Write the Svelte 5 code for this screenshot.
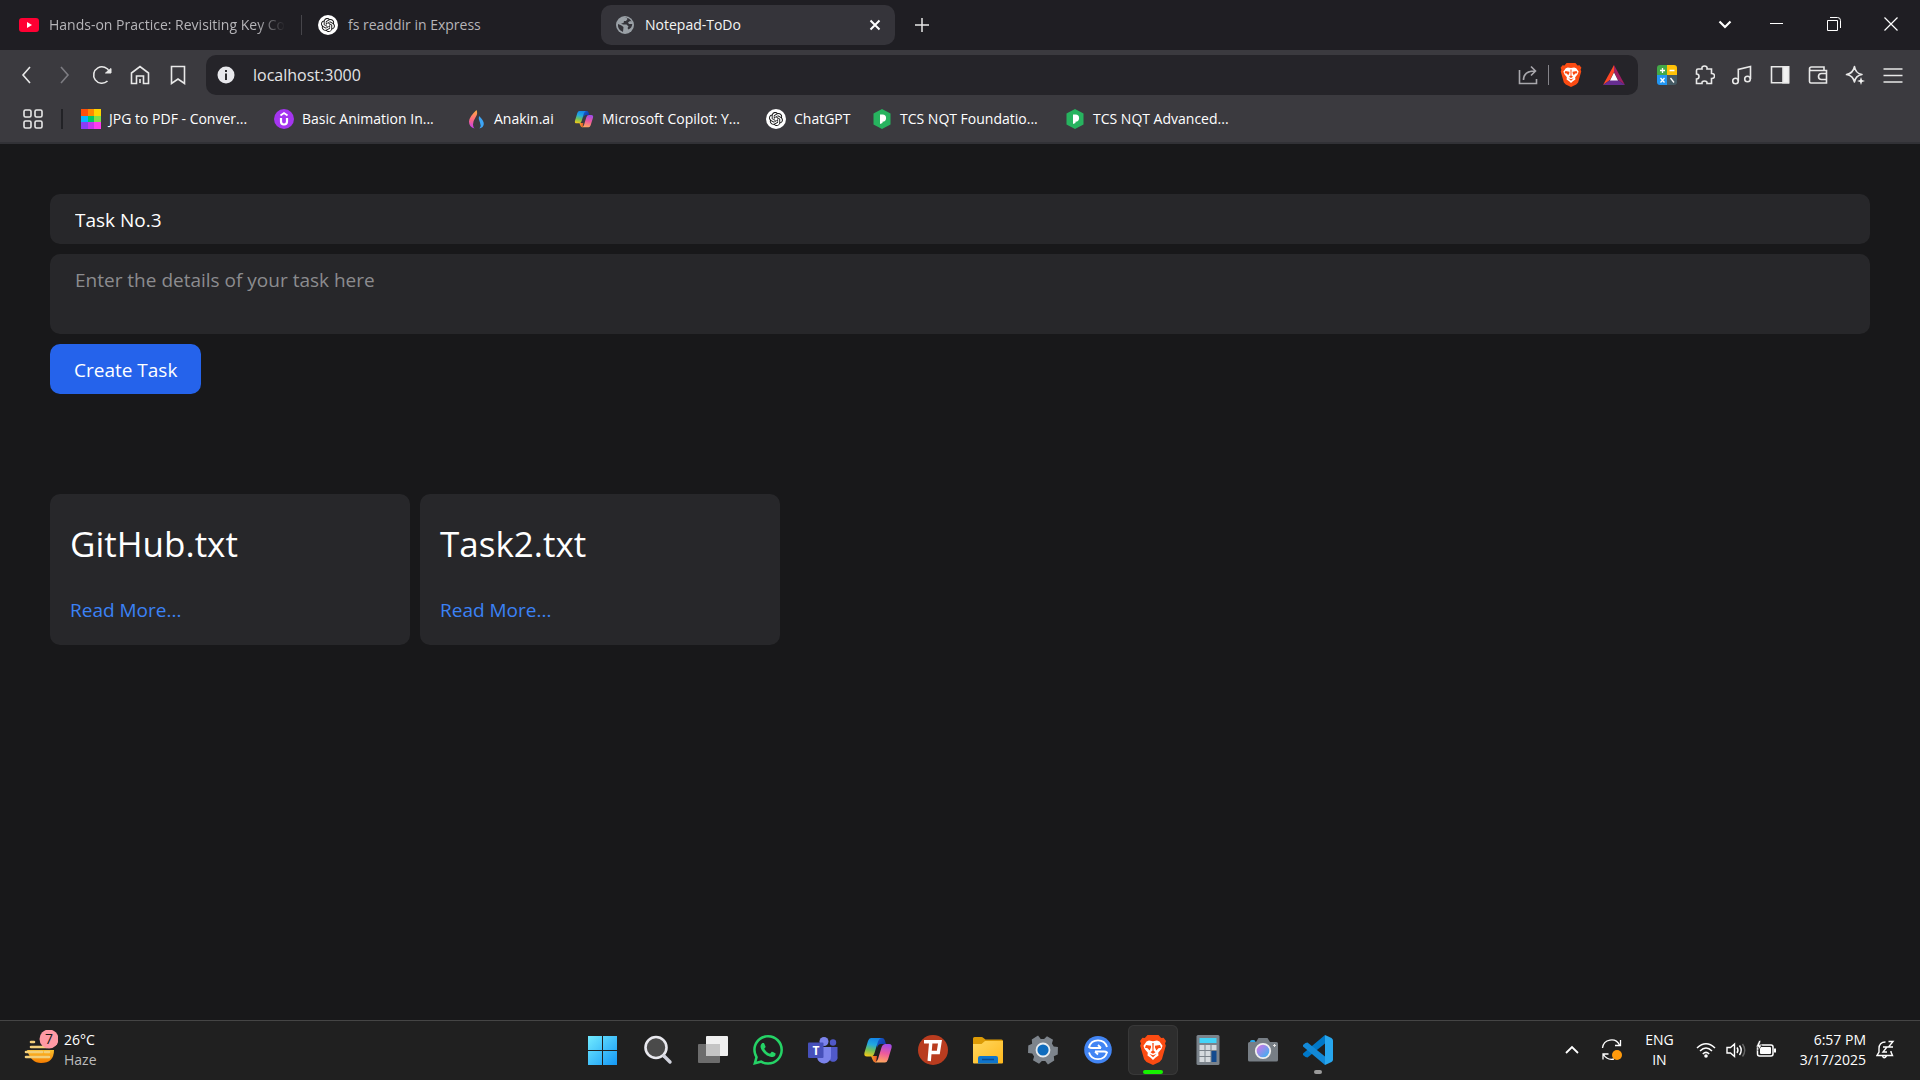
<script>
  let url = $state('localhost:3000');
  let title = $state('Task No.3');
  let details = $state('');
  const files = ['GitHub.txt', 'Task2.txt'];
  const bookmarks = [
    { icon: 'grid', label: 'JPG to PDF - Conver...' },
    { icon: 'uni', label: 'Basic Animation In...' },
    { icon: 'flame', label: 'Anakin.ai' },
    { icon: 'copilot', label: 'Microsoft Copilot: Y...' },
    { icon: 'openai', label: 'ChatGPT' },
    { icon: 'prep', label: 'TCS NQT Foundatio...' },
    { icon: 'prep', label: 'TCS NQT Advanced...' }
  ];
  const apps = [
    ['start', 'Start'],
    ['search', 'Search'],
    ['taskview', 'Task view'],
    ['whatsapp', 'WhatsApp'],
    ['teams', 'Teams'],
    ['copilot', 'Copilot'],
    ['psiphon', 'Psiphon'],
    ['folder', 'File Explorer'],
    ['gear', 'Settings'],
    ['share', 'Quick Share'],
    ['brave', 'Brave'],
    ['calc', 'Calculator'],
    ['camera', 'Camera'],
    ['vscode', 'Visual Studio Code']
  ];
</script>

{#snippet brave(size)}
  <svg width={size} height={size} viewBox="0 0 30 30">
    <path fill="#fb4b12" d="M9.5 0h11l2.7 3 2.4-.3 2.4 3.2-1 2.6.8 2.2-3.9 13.6-2.4 2.6L15 30l-6.500-3.100-2.400-2.600L2.200 10.700 3 8.500 2 5.900l2.400-3.200 2.400.3z" />
    <path fill="#fff" d="M11 5.500l4 .8 4-.8 2.500 1 3 4.200-1 3-3.300 4 .3 2.800-3.200 2.300L15 25l-2.300-2.200-3.200-2.300.3-2.800-3.300-4-1-3 3-4.200z" />
    <path fill="#fb4b12" d="M8 10l5 .8v1.600l-1.400 3-2-2.200-2.700-.5zM22 10l-5 .8v1.600l1.400 3 2-2.200 2.700-.5zM14.300 8h1.400l-.2 7.500 2 1.800-2.500 1.500-2.500-1.500 2-1.800zM11.500 19l3.500 1.200 3.500-1.200-3.500 3.200z" />
  </svg>
{/snippet}

{#snippet openai(size)}
  <svg width={size} height={size} viewBox="0 0 40 40">
    <circle cx="20" cy="20" r="20" fill="#fff" />
    <path transform="translate(6 6) scale(1.160)" fill="#111" d="M22.2819 9.8211a5.9847 5.9847 0 0 0-.5157-4.9108 6.0462 6.0462 0 0 0-6.5098-2.9A6.0651 6.0651 0 0 0 4.9807 4.1818a5.9847 5.9847 0 0 0-3.9977 2.9 6.0462 6.0462 0 0 0 .7427 7.0966 5.98 5.98 0 0 0 .511 4.9107 6.051 6.051 0 0 0 6.5146 2.9001A5.9847 5.9847 0 0 0 13.2599 24a6.0557 6.0557 0 0 0 5.7718-4.2058 5.9894 5.9894 0 0 0 3.9977-2.9001 6.0557 6.0557 0 0 0-.7475-7.0729zm-9.022 12.6081a4.4755 4.4755 0 0 1-2.8764-1.0408l.1419-.0804 4.7783-2.7582a.7948.7948 0 0 0 .3927-.6813v-6.7369l2.02 1.1686a.071.071 0 0 1 .038.052v5.5826a4.504 4.504 0 0 1-4.4945 4.4944zm-9.6607-4.1254a4.4708 4.4708 0 0 1-.5346-3.0137l.142.0852 4.783 2.7582a.7712.7712 0 0 0 .7806 0l5.8428-3.3685v2.3324a.0804.0804 0 0 1-.0332.0615L9.74 19.9502a4.4992 4.4992 0 0 1-6.1408-1.6464zM2.3408 7.8956a4.485 4.485 0 0 1 2.3655-1.9728V11.6a.7664.7664 0 0 0 .3879.6765l5.8144 3.3543-2.0201 1.1685a.0757.0757 0 0 1-.071 0l-4.8303-2.7865A4.504 4.504 0 0 1 2.3408 7.872zm16.5963 3.8558L13.1038 8.364 15.1192 7.2a.0757.0757 0 0 1 .071 0l4.8303 2.7913a4.4944 4.4944 0 0 1-.6765 8.1042v-5.6772a.79.79 0 0 0-.407-.667zm2.0107-3.0231l-.142-.0852-4.7735-2.7818a.7759.7759 0 0 0-.7854 0L9.409 9.2297V6.8974a.0662.0662 0 0 1 .0284-.0615l4.8303-2.7866a4.4992 4.4992 0 0 1 6.6802 4.66zM8.3065 12.863l-2.02-1.1638a.0804.0804 0 0 1-.038-.0567V6.0742a4.4992 4.4992 0 0 1 7.3757-3.4537l-.142.0805L8.704 5.459a.7948.7948 0 0 0-.3927.6813zm1.0976-2.3654l2.602-1.4998 2.6069 1.4998v2.9994l-2.5974 1.4997-2.6067-1.4997Z" />
  </svg>
{/snippet}

{#snippet copilot(size)}
  <svg width={size} height={size} viewBox="0 0 30 30">
    <path fill="url(#cpDark)" d="M14 3h5q2 0 2.700 2l1.300 4h-5q-3 0-4 4z" />
    <path fill="url(#cpLeft)" d="M8 3h10q-2 .5-3 3.500L11.500 18q-1 3.500-4 3.500H4q-3.500 0-2.500-4L5 6q1-3 3-3z" />
    <path fill="url(#cpOrange)" d="M8 21h6l-1 6.500q-2.500 0-3.300-2.500z" />
    <path fill="url(#cpRight)" d="M22 27.500H12q2-.5 3-3.500l3.500-11.500q1-3.500 4-3.500H26q3.500 0 2.500 4L25 24.500q-1 3-3 3z" />
  </svg>
{/snippet}

{#snippet siteIcon(name)}
  {#if name === 'grid'}
    <svg width="20" height="20" viewBox="0 0 21 21" shape-rendering="crispEdges">
      <path fill="#ff4f0a" d="M0 0h7v7H0z" /><path fill="#ff8a00" d="M7 0h7v7H7z" /><path fill="#ffd400" d="M14 0h7v7h-7z" />
      <path fill="#08b5ff" d="M0 7h7v7H0z" /><path fill="#00c765" d="M7 7h7v7H7z" /><path fill="#7ee04c" d="M14 7h7v7h-7z" />
      <path fill="#8a3df5" d="M0 14h7v7H0z" /><path fill="#c637ee" d="M7 14h7v7H7z" /><path fill="#ff3df0" d="M14 14h7v7h-7z" />
    </svg>
  {:else if name === 'uni'}
    <svg width="20" height="20" viewBox="0 0 20 20">
      <circle cx="10" cy="10" r="10" fill="#a435f0" />
      <path d="M7 9v3.500a3 3 0 0 0 6 0V9" fill="none" stroke="#fff" stroke-width="2.200" />
      <path d="M6.500 6.500L10 4l3.500 2.500" fill="none" stroke="#fff" stroke-width="1.800" />
    </svg>
  {:else if name === 'flame'}
    <svg width="20" height="20" viewBox="0 0 20 20">
      <path fill="url(#flame)" d="M10.500 1q1.500 3.500-.5 6.500Q7 12 7 15.500q0 2.500 1.500 4Q3 18 3 12.500 3 8 10.500 1z" />
      <path fill="#3ca5f6" d="M13 7q5 4.500 4.800 8-.3 3.500-4.300 4.500 2-3 .5-6-2-3.500-1-6.500z" />
    </svg>
  {:else if name === 'copilot'}
    {@render copilot(20)}
  {:else if name === 'openai'}
    {@render openai(20)}
  {:else}
    <svg width="20" height="20" viewBox="0 0 20 20">
      <path fill="#27b35f" d="M10 0l8.500 4.500v11L10 20l-8.500-4.500v-11z" />
      <path fill="#fff" d="M8 5.500h2.500a3.600 3.600 0 0 1 0 7.200V14L8 15z" />
    </svg>
  {/if}
{/snippet}

{#snippet appIcon(name)}
  {#if name === 'copilot'}
    {@render copilot(30)}
  {:else if name === 'brave'}
    {@render brave(30)}
  {:else}
    <svg width="30" height="30" viewBox="0 0 30 30">
      {#if name === 'start'}
        <path fill="url(#win)" d="M0 1h14v14H0zM15 1h14v14H15zM0 16h14v14H0zM15 16h14v14H15z" />
      {:else if name === 'search'}
        <circle cx="13" cy="12.500" r="10.500" fill="#4a4a4a" stroke="#e8e8ee" stroke-width="2.600" />
        <path d="M21 21l6 6" stroke="#d0d2dc" stroke-width="3.400" stroke-linecap="round" />
      {:else if name === 'taskview'}
        <rect x="8" y="1" width="22" height="20" rx="1" fill="#f0f0f0" />
        <rect y="9" width="22" height="19" rx="1" fill="#6c6c6c" />
        <path fill="#c4c4c4" d="M8 9h14v12H8z" />
      {:else if name === 'whatsapp'}
        <path transform="scale(1.250)" fill="#25d366" d="M17.472 14.382c-.297-.149-1.758-.867-2.03-.967-.273-.099-.471-.148-.67.15-.197.297-.767.966-.94 1.164-.173.199-.347.223-.644.075-.297-.15-1.255-.463-2.39-1.475-.883-.788-1.48-1.761-1.653-2.059-.173-.297-.018-.458.13-.606.134-.133.298-.347.446-.52.149-.174.198-.298.298-.497.099-.198.05-.371-.025-.52-.075-.149-.669-1.612-.916-2.207-.242-.579-.487-.5-.669-.51-.173-.008-.371-.01-.57-.01-.198 0-.52.074-.792.372-.272.297-1.04 1.016-1.04 2.479 0 1.462 1.065 2.875 1.213 3.074.149.198 2.096 3.2 5.077 4.487.709.306 1.262.489 1.694.625.712.227 1.36.195 1.871.118.571-.085 1.758-.719 2.006-1.413.248-.694.248-1.289.173-1.413-.074-.124-.272-.198-.57-.347m-5.421 7.403h-.004a9.87 9.87 0 01-5.031-1.378l-.361-.214-3.741.982.998-3.648-.235-.374a9.86 9.86 0 01-1.51-5.26c.001-5.45 4.436-9.884 9.888-9.884 2.64 0 5.122 1.03 6.988 2.898a9.825 9.825 0 012.893 6.994c-.003 5.45-4.437 9.884-9.885 9.884m8.413-18.297A11.815 11.815 0 0012.05 0C5.495 0 .16 5.335.157 11.892c0 2.096.547 4.142 1.588 5.945L.057 24l6.305-1.654a11.882 11.882 0 005.683 1.448h.005c6.554 0 11.89-5.335 11.893-11.893a11.821 11.821 0 00-3.48-8.413z" />
      {:else if name === 'teams'}
        <circle cx="25" cy="7.500" r="3.200" fill="#5059c9" />
        <path fill="#5059c9" d="M21 12h8.500v9.500a3.500 3.500 0 0 1-8.500 2z" />
        <circle cx="16" cy="6.500" r="4.500" fill="#7b83eb" />
        <path fill="#7b83eb" d="M9 12h14v9a7 7 0 0 1-14 1z" />
        <rect y="7.500" width="15.500" height="15.500" rx="1" fill="#4650ba" />
        <text x="8" y="19.500" text-anchor="middle" font-size="12" font-weight="700" fill="#fff">T</text>
      {:else if name === 'psiphon'}
        <circle cx="15" cy="15" r="15" fill="#b93c1f" />
        <path fill="none" stroke="#fff" stroke-width="3.400" d="M6 6.700h16l-1.700 10.800H13M12.800 7l-1.600 19" />
      {:else if name === 'folder'}
        <path fill="#dd9b06" d="M0 3.500Q0 2 1.500 2h7q1 0 2 1l2 1.500h16Q30 4.500 30 6v6H0z" />
        <path fill="url(#fold)" d="M0 9h8.500l3.500-3h18v21.500q0 1-1 1H1q-1 0-1-1z" />
        <path fill="#0f75cc" d="M5 28.500V23q0-2 2-2h16q2 0 2 2v5.500z" />
        <path stroke="#0a4a90" stroke-width="1.500" d="M9 24.500h12" />
      {:else if name === 'gear'}
        <path fill="#7d848c" d="M11.500 1h7l1 4 3 1.500L26.500 5 30 11.500 27.500 15l2.500 3.500-3.500 6.500-4-1.500-3 1.500-1 4h-7l-1-4-3-1.500-4 1.500L0 18.500 2.500 15 0 11.500 3.500 5l4 1.500 3-1.500z" transform="rotate(30 15 15)" />
        <circle cx="15" cy="15" r="6.500" fill="#0f6cbd" stroke="#e9edf0" stroke-width="1.800" />
      {:else if name === 'share'}
        <circle cx="15" cy="14.800" r="13.800" fill="#4285f4" />
        <path fill="none" stroke="#fff" stroke-width="1.800" d="M24 12A9.400 9.400 0 0 0 6 12q1 1 3 1h9M6 17.500A9.400 9.400 0 0 0 24 17.500q-1-1-3-1h-9M15 10l3 3M15 19.500l-3-3" />
      {:else if name === 'calc'}
        <rect x="3.500" width="23" height="30" rx="1.500" fill="#7b838b" />
        <path fill="#43d4f7" d="M6.500 3h17v5h-17z" />
        <path fill="#d5dade" d="M6.500 10h5v5h-5zM12.500 10h5v5h-5zM18.500 10h5v5h-5zM6.500 16h5v5h-5zM12.500 16h5v5h-5zM6.500 22h5v5h-5zM12.500 22h5v5h-5z" />
        <path fill="#134a8e" d="M18.500 16h5v11h-5z" />
      {:else if name === 'camera'}
        <path fill="#29a8e8" d="M2 7q0-2 2-2h1.500q2 0 2 2z" />
        <path fill="#777e85" d="M1.500 7H8l2.500-4h9L22 7h6.500Q30 7 30 8.500V25q0 1.500-1.500 1.500h-27Q0 26.500 0 25V8.500Q0 7 1.500 7z" />
        <circle cx="15" cy="16" r="7.200" fill="url(#lens)" stroke="#eee" stroke-width="1.800" />
        <path stroke="#e4e4e4" d="M25 10.500h3M26.500 9v3" />
      {:else if name === 'vscode'}
        <path fill="#0078c8" d="M22 0v8.500L4.500 22.500 2.500 22 0 20v-1.500z" />
        <path fill="#1289d8" d="M22 30v-8.500L4.500 7.500 2.500 8 0 10v1.500z" />
        <path fill="#27a6ee" d="M22 0l6.500 3Q30 4 30 5.500v19q0 1.500-1.500 2.500L22 30z" />
      {/if}
    </svg>
  {/if}
{/snippet}

<svg class="defs" width="0" height="0" aria-hidden="true">
  <defs>
    <linearGradient id="win" gradientUnits="userSpaceOnUse" x1="1" y1="1" x2="30" y2="30"><stop offset="0" stop-color="#70eaff" /><stop offset="1" stop-color="#1296f5" /></linearGradient>
    <linearGradient id="fold" x1="0" y1="0" x2="1" y2="1"><stop offset="0" stop-color="#ffd75e" /><stop offset="1" stop-color="#ffb81c" /></linearGradient>
    <linearGradient id="lens" x1="0" y1="0" x2="1" y2="1"><stop offset=".2" stop-color="#c27be8" /><stop offset=".9" stop-color="#35b4f0" /></linearGradient>
    <linearGradient id="flame" x1="0" y1="0" x2="0" y2="1"><stop offset="0" stop-color="#ffb13b" /><stop offset=".5" stop-color="#ff6a7e" /><stop offset="1" stop-color="#c53bf0" /></linearGradient>
    <linearGradient id="cpLeft" x1=".5" y1="0" x2=".3" y2="1"><stop offset="0" stop-color="#1487e8" /><stop offset=".35" stop-color="#23a9e0" /><stop offset=".65" stop-color="#6fc05a" /><stop offset="1" stop-color="#f4c918" /></linearGradient>
    <linearGradient id="cpRight" x1=".6" y1="0" x2=".4" y2="1"><stop offset="0" stop-color="#a04be8" /><stop offset=".5" stop-color="#ee5a9c" /><stop offset="1" stop-color="#ffa85e" /></linearGradient>
    <linearGradient id="cpDark" x1="0" y1="0" x2="1" y2="1"><stop offset="0" stop-color="#1a5fd0" /><stop offset="1" stop-color="#0a2f9c" /></linearGradient>
    <linearGradient id="cpOrange" x1="0" y1="0" x2="1" y2="0"><stop offset="0" stop-color="#f5a623" /><stop offset="1" stop-color="#e8502c" /></linearGradient>
    <linearGradient id="sun" x1="0" y1="0" x2="0" y2="1"><stop offset="0" stop-color="#fbc02d" /><stop offset="1" stop-color="#f57c00" /></linearGradient>
  </defs>
</svg>

<div class="screen">
  <header>
    <div class="strip">
      <nav class="tabs" aria-label="Tabs">
        <button class="tab">
          <svg width="20" height="20" viewBox="0 0 20 20"><rect y="3" width="20" height="14" rx="3" fill="#ff0033" /><path fill="#fff" d="M8 7l5 3-5 3z" /></svg>
          <span class="label fade">Hands-on Practice: Revisiting Key Co</span>
        </button>
        <i class="divider"></i>
        <button class="tab">{@render openai(20)}<span class="label">fs readdir in Express</span></button>
        <div class="tab active">
          <svg width="20" height="20" viewBox="0 0 20 20"><circle cx="10" cy="10" r="9" fill="#9aa0a6" /><path fill="#35343a" d="M3 9l3.500 1.500 2 1.500-.5 5-2.500-1.500Q2.500 13 3 9zM9 2.800l2.500-.3 1 1.500-1.500 2H9l-.500 2-2.500.5L8 9.500h3.500l2 2-1 1.500 1 1.500q3.500-1.500 3.800-5.500L14 9l-1-1.500 2-1.500 1.500.500Q14.500 2 9 2.800z" /></svg>
          <span class="label">Notepad-ToDo</span>
          <button aria-label="Close tab"><svg width="12" height="12" viewBox="0 0 12 12"><path d="M1.500 1.500l9 9M10.500 1.500l-9 9" stroke="#fff" stroke-width="2" /></svg></button>
        </div>
        <button class="plus" aria-label="New tab"><svg width="14" height="14" viewBox="0 0 14 14"><path d="M7 0v14M0 7h14" stroke="#e8e8e8" stroke-width="1.500" /></svg></button>
      </nav>
      <div class="window">
        <button class="search-tabs" aria-label="Search tabs"><svg width="14" height="14" viewBox="0 0 14 14"><path d="M1.500 4.500L7 10l5.500-5.500" fill="none" stroke="#fff" stroke-width="2.200" /></svg></button>
        <button aria-label="Minimize"><svg width="14" height="14" viewBox="0 0 14 14"><path d="M0 6.500h13" stroke="#fff" /></svg></button>
        <button aria-label="Restore"><svg width="14" height="14" viewBox="0 0 14 14"><path d="M.5 3.500h10v10H.5zM3 .5h7.500q3 0 3 3V11" fill="none" stroke="#fff" /></svg></button>
        <button aria-label="Close"><svg width="14" height="14" viewBox="0 0 14 14"><path d="M.5.5l13 13M13.500.5l-13 13" stroke="#fff" stroke-width="1.200" /></svg></button>
      </div>
    </div>
    <div class="toolbar">
      <div class="nav">
        <button aria-label="Back"><svg viewBox="0 0 20 20"><path d="M14 2L7 10l7 8" /></svg></button>
        <button class="off" aria-label="Forward"><svg viewBox="0 0 20 20"><path d="M7 2l7 8-7 8" /></svg></button>
        <button aria-label="Reload"><svg viewBox="0 0 20 20"><path d="M15.500 16A8.200 8.200 0 1 1 17.500 7" /><path d="M13.500 8h5.500V3.500z" fill="#e8e8e8" stroke-width="1" /></svg></button>
        <button aria-label="Home"><svg viewBox="0 0 20 20"><path d="M1.500 18.500V8L10 1.500 18.500 8v10.500h-5V11h-7v7.500zM10 18v-4" /></svg></button>
        <button aria-label="Bookmark this page"><svg viewBox="0 0 20 20"><path d="M3.500 1.500h13v17L10 14l-6.500 4.500z" /></svg></button>
      </div>
      <div class="address">
        <svg width="18" height="18" viewBox="0 0 18 18"><circle cx="9" cy="9" r="8.500" fill="#e8e8ec" /><path d="M9 4v2M9 7.500V14" stroke="#2a2a2e" stroke-width="2" /></svg>
        <input aria-label="Address" bind:value={url} />
        <button aria-label="Share"><svg class="line dim" viewBox="0 0 20 20"><path d="M1.500 5v13.500h17V14M5.500 15q0-9 11.500-9M13 1.500L17.500 6 13 10.500" /></svg></button>
        <i class="divider light"></i>
        <button class="shield" aria-label="Brave Shields">{@render brave(24)}</button>
        <button aria-label="Brave Rewards"><svg width="22" height="20" viewBox="0 0 22 20"><path fill="#ff4724" d="M11 0v7l-4 8-7 5z" /><path fill="#9e1f63" d="M11 0l11 20-7-5-4-8z" /><path fill="#662d91" d="M0 20l7-5h8l7 5z" /><path fill="#fff" d="M11 7.500l4 8H7z" /></svg></button>
      </div>
      <div class="nav right">
        <button aria-label="Calculator extension"><svg width="20" height="20" viewBox="0 0 20 20"><path fill="#43a847" d="M3 0h7v10H0V3q0-3 3-3z" /><path fill="#ffc107" d="M10 0h7q3 0 3 3v7H10z" /><path fill="#2196f3" d="M0 10h10v10H3q-3 0-3-3z" /><path fill="#455a64" d="M10 10h10v7q0 3-3 3h-7z" /><path class="marks" d="M5.500 3v5M3 5.500h5M12.500 5.500h5M3.500 13l4 4.500M7.500 13l-4 4.500M13.500 13l3.500 4.500" /></svg></button>
        <button aria-label="Extensions"><svg viewBox="0 0 20 20"><path d="M3 4h4q-.5-3 2.500-3T12 4h4.500v4.500q3-.2 3 2.500t-3 2.500v5H12q.3-2.500-2.500-2.500T7 18.500H1.500V14Q4 14 4 11.500T1.500 9V5.500Q1.500 4 3 4z" /></svg></button>
        <button aria-label="Media"><svg viewBox="0 0 20 20"><circle cx="3.500" cy="16" r="2.800" /><circle cx="15.500" cy="14" r="2.800" /><path d="M6.300 16V4.500L18.500 1.500V14" /></svg></button>
        <button aria-label="Sidebar"><svg viewBox="0 0 20 20"><path d="M1.500 1.800h17v16h-17z" /><path d="M13 1.800h5.500v16H13z" fill="#f2f2f2" /></svg></button>
        <button aria-label="Wallet"><svg viewBox="0 0 20 20"><path d="M1.500 4.500v12q0 1.500 1.500 1.500h15.500V5.500H3Q1.500 5.500 1.500 4 1.500 2 3.500 2h12.500v3M18.500 8.500h-5a3 3 0 0 0 0 6h5" /></svg></button>
        <button aria-label="Leo AI"><svg viewBox="0 0 20 20"><path d="M9.500 1.500Q10.500 8.500 17 9.500 10.500 10.500 9.500 17 8 10.500 1.500 9.500 8 8.500 9.500 1.500z" stroke-linejoin="round" /><path d="M16 12l1 3 3 1-3 1-1 3-1-3-3-1 3-1z" fill="#f2f2f2" stroke="none" /></svg></button>
        <button aria-label="Menu"><svg viewBox="0 0 20 20"><path d="M.5 4h19M.5 10.500h19M.5 17h19" /></svg></button>
      </div>
    </div>
    <nav class="bookmarks" aria-label="Bookmarks">
      <button aria-label="All bookmarks"><svg class="line" viewBox="0 0 20 20"><rect x="1" y="1" width="7" height="7" rx="1.500" /><rect x="12" y="1" width="7" height="7" rx="1.500" /><rect x="1" y="12" width="7" height="7" rx="1.500" /><rect x="12" y="12" width="7" height="7" rx="1.500" /></svg></button>
      <i class="divider dark"></i>
      <div class="sites">
        {#each bookmarks as b}
          <a href="#bookmark">{@render siteIcon(b.icon)}<span>{b.label}</span></a>
        {/each}
      </div>
    </nav>
  </header>

  <main>
    <form onsubmit={(e) => e.preventDefault()}>
      <input aria-label="Task title" bind:value={title} />
      <textarea aria-label="Task details" placeholder="Enter the details of your task here" bind:value={details}></textarea>
      <button>Create Task</button>
    </form>
    <div class="cards">
      {#each files as file}
        <article>
          <h1>{file}</h1>
          <a href="#read">Read More...</a>
        </article>
      {/each}
    </div>
  </main>

  <footer>
    <button class="weather">
      <svg width="36" height="36" viewBox="0 0 36 36">
        <path fill="url(#sun)" d="M5 20h27q0 13-13 13Q9 33 5 20z" />
        <path d="M9 12h3M9 17h16M4 22h16M23 22h4M4 27h23" stroke="#f2cf7a" stroke-width="2.600" stroke-linecap="round" />
        <circle cx="27" cy="9" r="9.500" fill="#ff99a4" />
        <text x="27" y="14" text-anchor="middle" font-size="14" fill="#1a1a1a">7</text>
      </svg>
      <span class="stack"><span>26°C</span><span class="muted">Haze</span></span>
    </button>
    <div class="apps">
      {#each apps as [name, label]}
        <button class:current={name === 'brave'} class:open={name === 'vscode'} aria-label={label}>{@render appIcon(name)}</button>
      {/each}
    </div>
    <div class="tray">
      <button class="caret" aria-label="Show hidden icons"><svg width="14" height="14" viewBox="0 0 14 14"><path d="M1 10l6-6 6 6" fill="none" stroke="#fff" stroke-width="1.800" /></svg></button>
      <button class="update" aria-label="Updates"><svg width="22" height="22" viewBox="0 0 22 22"><path d="M1.500 9A9 9 0 0 1 18.500 6M19.500 1v5.500H14M13 20Q6 21.500 2.500 15.500M2 20.500V15h5.500" fill="none" stroke="#fff" stroke-width="1.300" /><circle cx="16" cy="16" r="5" fill="#ff9a0c" /></svg></button>
      <button class="stack lang"><span>ENG</span><span>IN</span></button>
      <button class="status" aria-label="Network, volume and battery">
        <svg width="20" height="20" viewBox="0 0 20 20"><path d="M1 8Q10-.500 19 8M4 11q6-6 12 0M6.800 14q3.200-3.200 6.400 0" fill="none" stroke="#fff" stroke-width="1.500" /><circle cx="10" cy="16" r="1.800" fill="#fff" /></svg>
        <svg width="20" height="20" viewBox="0 0 20 20"><path d="M1 7.500h3.500L8.500 4v12.500l-4-3.500H1zM11 7.500q2 2.700 0 5.500M13.500 5.500q3.500 4.700 0 9.500" fill="none" stroke="#fff" stroke-width="1.400" /><path d="M16.500 4q4.500 6.200 0 12.500" fill="none" stroke="#666" stroke-width="1.400" /></svg>
        <svg width="20" height="20" viewBox="0 0 20 20"><rect x="1.500" y="5" width="15.500" height="11" rx="2" fill="none" stroke="#fff" stroke-width="1.500" /><rect x="4" y="7" width="11" height="7" rx="1" fill="#fff" /><path d="M18 8.500h2v4h-2z" fill="#fff" /><path d="M3 .5L0 7h2.500L2 11l4-6H3.500L5 .5z" fill="#fff" stroke="#202020" stroke-width=".6" /></svg>
      </button>
      <button class="stack clock"><span>6:57 PM</span><span>3/17/2025</span></button>
      <button class="bell" aria-label="Notifications"><svg width="20" height="20" viewBox="0 0 20 20"><path d="M9.500 2Q3 2 3 8.500V12L1 15.500h15.500L15 12v-1M6.500 16q1.500 3.500 4 0" fill="none" stroke="#fff" stroke-width="1.400" /><path d="M7 7h4l-4 5h4M12.500 1.500H17L12.500 7H17" fill="none" stroke="#fff" stroke-width="1.400" /></svg></button>
    </div>
  </footer>
</div>

<style>
  :global(body) { margin: 0; background: #18181a; }
  .defs { position: absolute; }
  .screen {
    min-height: 100vh;
    display: flex;
    flex-direction: column;
    background: #18181a;
    color: #fff;
    font-family: 'Open Sans', 'Noto Sans', sans-serif;
    font-size: 14px;
    line-height: 20px;
  }
  * { box-sizing: border-box; }
  svg { display: block; flex: none; }
  button {
    display: flex;
    align-items: center;
    justify-content: center;
    padding: 0;
    border: 0;
    background: none;
    color: inherit;
    font: inherit;
  }
  a { color: inherit; text-decoration: none; }
  input, textarea { border: 0; outline: 0; font: inherit; color: inherit; display: block; }

  header { background: #3b3a3f; border-bottom: 2px solid #313136; }
  .strip { display: flex; justify-content: space-between; height: 50px; background: #1f1e23; }
  .tabs { display: flex; align-items: center; padding-left: 5px; }
  .tab {
    display: flex;
    align-items: center;
    justify-content: flex-start;
    gap: 10px;
    width: 294px;
    height: 40px;
    padding: 0 14px;
    color: #b6b5b9;
    white-space: nowrap;
  }
  .label { flex: 1; text-align: left; }
  .fade { mask-image: linear-gradient(to right, #000 88%, transparent 100%); }
  .active { margin-left: 3px; border-radius: 10px; background: #35343a; color: #f4f4f4; }
  .divider { width: 1px; height: 20px; margin: 0 2px; background: #46454a; }
  .plus { width: 54px; height: 40px; }
  .window { display: flex; padding-right: 1px; }
  .window button { width: 57px; height: 48px; }
  .window .search-tabs { width: 46px; }

  .toolbar { display: flex; align-items: center; height: 50px; }
  .nav { display: flex; padding: 0 9px 0 7px; }
  .nav button { width: 38px; height: 40px; }
  .nav.right { justify-content: space-between; width: 282px; padding: 0 17px 0 19px; }
  .nav.right button { width: 20px; }
  .nav svg, .line { width: 20px; height: 20px; fill: none; stroke: #e8e8e8; stroke-width: 1.6px; }
  .nav.right button:first-child svg { stroke: none; }
  .nav .marks { stroke: #fff; stroke-width: 1.3px; }
  .nav .off svg { stroke: #7d7c82; }
  .line.dim { stroke: #a9a8ad; }
  .address {
    flex: 1;
    display: flex;
    align-items: center;
    height: 40px;
    padding: 0 13px 0 11px;
    border-radius: 10px;
    background: #252429;
  }
  .address input { flex: 1; min-width: 0; padding: 0 18px; background: none; color: #e4e4e6; font-size: 16px; }
  .light { margin: 0 10px; background: #85848a; }
  .shield { margin-right: 20px; }

  .bookmarks { display: flex; align-items: center; gap: 18px; height: 42px; padding: 0 22px 4px 23px; }
  .sites { display: grid; grid-template-columns: 193px 192px 108px 192px 106px 193px auto; }
  .sites a { display: flex; align-items: center; gap: 8px; white-space: nowrap; }
  .bookmarks .dark { width: 2px; margin: 0; background: #222226; }

  main { flex: 1; padding: 50px; font-size: 19px; line-height: 30px; }
  form { display: flex; flex-direction: column; align-items: flex-start; gap: 10px; }
  form input, form textarea { width: 100%; padding: 11px 25px 9px; border-radius: 10px; background: #27272a; }
  form textarea { height: 80px; resize: none; }
  form textarea::placeholder { color: #8c8c8f; opacity: 1; }
  form button { height: 50px; padding: 2px 24px 0; border-radius: 10px; background: #2563eb; }
  .cards { display: flex; gap: 10px; padding-top: 100px; }
  article { width: 360px; padding: 25px 20px 20px; border-radius: 10px; background: #27272a; }
  h1 { margin: 0 0 26px; font-size: 35px; font-weight: 400; line-height: 50px; }
  article a { color: #3b82f6; }

  footer {
    display: grid;
    grid-template-columns: 1fr auto 1fr;
    align-items: center;
    height: 60px;
    padding-bottom: 2px;
    border-top: 1px solid #454545;
    background: #202020;
  }
  .weather { justify-self: start; gap: 6px; padding-left: 22px; }
  .weather svg { align-self: flex-start; }
  .stack { display: flex; flex-direction: column; align-items: flex-start; justify-content: center; }
  .muted { color: #bcbcbc; }
  .apps { display: flex; }
  .apps button { position: relative; width: 55px; height: 50px; border-radius: 6px; }
  .apps .current { width: 50px; margin: 0 2px 0 3px; background: #2d2d2d; box-shadow: inset 0 0 0 1px #383838; }
  .current::after, .open::after {
    content: '';
    position: absolute;
    bottom: 1px;
    width: 20px;
    height: 4px;
    border-radius: 2px;
    background: #16f000;
  }
  .open::after { width: 8px; background: #9a9a9a; }
  .tray { display: flex; align-items: center; justify-self: end; padding-right: 24px; }
  .caret { margin-right: 22px; }
  .update { margin-right: 22px; }
  .lang { align-items: center; margin-right: 22px; }
  .status { gap: 10px; margin-right: 24px; }
  .clock { align-items: flex-end; margin-right: 10px; }
</style>
